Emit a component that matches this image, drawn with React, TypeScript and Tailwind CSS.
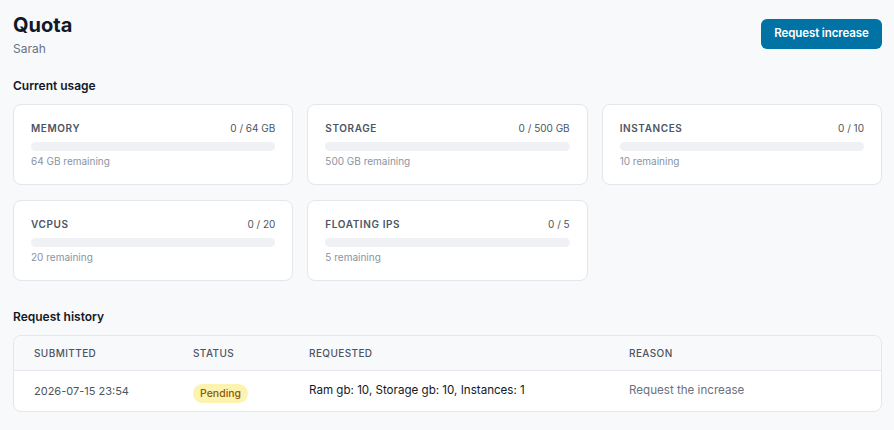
import React from 'react';

const quotas = [
  { label: 'Memory', value: '0 / 64 GB', left: '64 GB remaining' },
  { label: 'Storage', value: '0 / 500 GB', left: '500 GB remaining' },
  { label: 'Instances', value: '0 / 10', left: '10 remaining' },
  { label: 'vCPUs', value: '0 / 20', left: '20 remaining' },
  { label: 'Floating IPs', value: '0 / 5', left: '5 remaining' },
];

function QuotaCard({ label, value, left }: { label: string; value: string; left: string }) {
  return (
    <div className="bg-white border border-[#e3e6eb] rounded-lg px-[17px] pt-[16px] h-[81px]">
      <div className="flex items-center justify-between text-[10px] leading-[14px]">
        <span className="uppercase font-semibold tracking-[0.06em] text-[#4b5563]">{label}</span>
        <span className="text-[#4b5563]">{value}</span>
      </div>
      <div className="mt-[7px] h-[9px] rounded-full bg-[#f0f1f4]" />
      <div className="mt-[3px] text-[10px] leading-[14px] text-[#8a93a1]">{left}</div>
    </div>
  );
}

export default function App() {
  return (
    <div
      className="min-h-[430px] bg-[#f8f9fb] px-[13px] pt-[12px] pb-4 text-[#111827]"
      style={{ fontFamily: 'Inter, "Noto Sans", sans-serif' }}
    >
      {/* Header */}
      <div className="flex items-start justify-between">
        <div>
          <h1 className="text-[20px] leading-[26px] font-bold">Quota</h1>
          <p className="mt-[3px] text-[12px] leading-[16px] text-[#6b7280]">Sarah</p>
        </div>
        <button className="mt-[7px] mr-[-1px] h-[30px] w-[121px] rounded-md bg-[#0072a3] text-white text-[11.5px] font-semibold tracking-[-0.01em]">
          Request increase
        </button>
      </div>

      {/* Current usage */}
      <h2 className="mt-[21px] text-[12px] leading-[16px] font-semibold">Current usage</h2>
      <div className="mt-[10px] grid grid-cols-3 gap-x-[14px] gap-y-[15px] mr-[-1px]">
        {quotas.map((q) => (
          <QuotaCard key={q.label} {...q} />
        ))}
      </div>

      {/* Request history */}
      <h2 className="mt-[28px] text-[12px] leading-[16px] font-semibold">Request history</h2>
      <div className="mt-[10px] mr-[-1px] border border-[#e3e6eb] rounded-lg overflow-hidden bg-white">
        <div className="grid grid-cols-[179px_116px_320px_1fr] h-[35px] items-center bg-[#f8f9fb] border-b border-[#e3e6eb] text-[10px] font-medium tracking-[0.04em] uppercase text-[#4b5563]">
          <span className="pl-[20px]">Submitted</span>
          <span>Status</span>
          <span>Requested</span>
          <span>Reason</span>
        </div>
        <div className="grid grid-cols-[179px_116px_320px_1fr] h-[40px] items-center">
          <span className="pl-[20px] text-[11px] text-[#4b5563]">2026-07-15 23:54</span>
          <span>
            <span className="inline-flex items-center h-[19px] px-[7px] rounded-full bg-[#fdf3b0] text-[#8a5a0b] text-[10.5px] font-medium">
              Pending
            </span>
          </span>
          <span className="text-[11.6px] text-[#111827]">Ram gb: 10, Storage gb: 10, Instances: 1</span>
          <span className="text-[11.6px] text-[#6b7280]">Request the increase</span>
        </div>
      </div>
    </div>
  );
}
